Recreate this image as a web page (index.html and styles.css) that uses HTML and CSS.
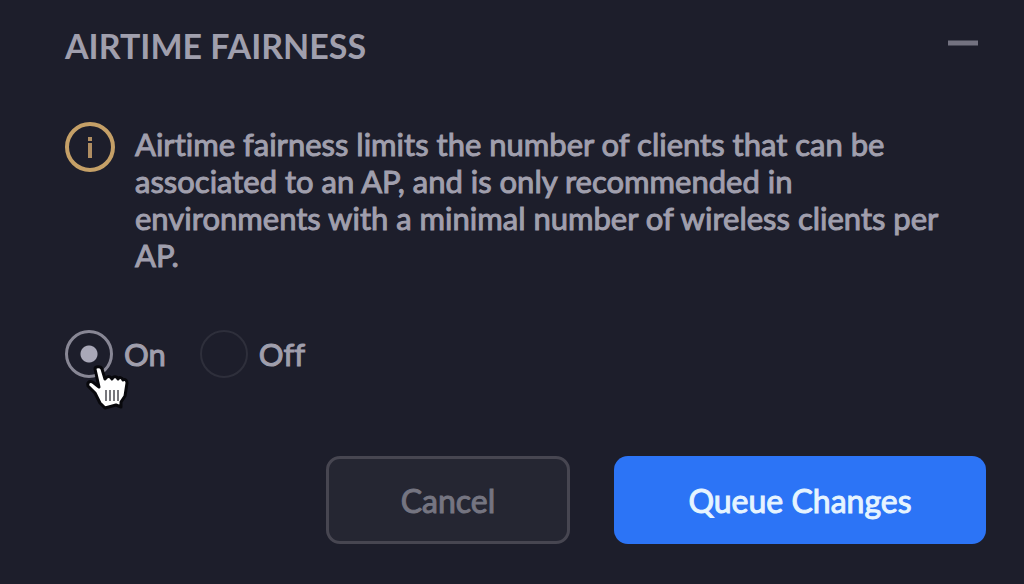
FILE: index.html
```html
<!DOCTYPE html>
<html lang="en">
<head>
  <meta charset="UTF-8" />
  <title>Airtime Fairness</title>
  <meta name="viewport" content="width=device-width, initial-scale=1.0"/>
  <link rel="stylesheet" href="styles.css">
</head>
<body>
  <form class="panel">
    <div class="panel-header">
      <h2>AIRTIME FAIRNESS</h2>
      <button type="button" class="collapse-button" aria-label="Collapse">
        <svg viewBox="0 0 30 6"><path d="M0 3h30" stroke="#737280" stroke-width="5"/></svg>
      </button>
    </div>

    <div class="note">
      <svg class="info-icon" viewBox="0 0 50 50">
        <circle cx="25" cy="25" r="23" fill="none" stroke="#c5a067" stroke-width="4"/>
        <path d="M25 15v4M25 21v15" stroke="#b08e62" stroke-width="4"/>
      </svg>
      <p>Airtime fairness limits the number of clients that can be associated to an AP, and is only recommended in environments with a minimal number of wireless clients per AP.</p>
    </div>

    <div class="options">
      <label class="option">
        <span class="radio-box">
          <input type="radio" name="airtime" value="on" checked>
          <!-- hand pointer -->
          <svg class="pointer" viewBox="0 0 44 46">
            <path d="M10 4C10 1 16 1 17 4L20 14L22 12C24 11 26 12 27 14C28 11 32 11 33 14C34 12 37 12 38 15C40 14 42 15 42 18L40 31L36 37L36 42L31 40L20 43L15 38L10 28L3 21C2 17 5 15 9 18L14 22Z" fill="#fff" stroke="#08080c" stroke-width="3" stroke-linejoin="round"/>
            <path d="M21 25v11M25 25v11M29 25v11M33 25v11" stroke="#77777c" stroke-width="2"/>
          </svg>
        </span>
        On
      </label>
      <label class="option">
        <span class="radio-box">
          <input type="radio" name="airtime" value="off">
        </span>
        Off
      </label>
    </div>

    <div class="actions">
      <button type="button" class="button cancel-button">Cancel</button>
      <button type="submit" class="button queue-button">Queue Changes</button>
    </div>
  </form>
</body>
</html>
```
FILE: styles.css
```css
body {
  font-family: Lato, sans-serif;
  font-variant-ligatures: none;
  background: #1d1e2b;
  color: #a09fad;
  margin: 0;
}

.panel {
  padding: 24px 38px 40px 65px;
}

/* header */
.panel-header {
  display: flex;
  align-items: flex-start;
  justify-content: space-between;
  padding-right: 8px;
}
.panel-header h2 {
  margin: 0;
  font-size: 34px;
  line-height: 44px;
  font-weight: bold;
}
.collapse-button {
  display: flex;
  margin-top: 16px;
  padding: 0;
  border: none;
  background: none;
  cursor: pointer;
}
.collapse-button svg {
  width: 30px;
  height: 6px;
}

/* info note */
.note {
  display: flex;
  align-items: flex-start;
  gap: 20px;
  margin-top: 54px;
}
.info-icon {
  flex: none;
  width: 50px;
  height: 50px;
}
.note p {
  margin: 4px 0 0;
  font-size: 31px;
  line-height: 37px;
}

/* slightly heavier than regular, lighter than bold */
.note p,
.option,
.button {
  -webkit-text-stroke: 1px currentColor;
}

/* radio buttons */
.options {
  display: flex;
  gap: 34px;
  margin-top: 56px;
}
.option {
  display: flex;
  align-items: center;
  gap: 11px;
  font-size: 31px;
  line-height: 48px;
  cursor: pointer;
}
.radio-box {
  display: flex;
  position: relative;
}
.option input {
  appearance: none;
  width: 48px;
  height: 48px;
  margin: 0;
  border: 2px solid #2e2f3b;
  border-radius: 50%;
}
.option input:checked {
  border: 3px solid #888795;
  background: radial-gradient(circle, #a9a8b8 8px, transparent 9px);
}
.pointer {
  position: absolute;
  left: 20px;
  top: 35px;
  width: 44px;
  height: 46px;
}

/* buttons */
.actions {
  display: flex;
  justify-content: flex-end;
  gap: 44px;
  margin-top: 78px;
}
.button {
  box-sizing: border-box;
  height: 88px;
  font-family: inherit;
  font-size: 32px;
  border-radius: 14px;
  cursor: pointer;
}
.cancel-button {
  width: 244px;
  border: 3px solid #474651;
  background: #252632;
  color: #757581;
}
.queue-button {
  width: 372px;
  border: none;
  background: #2c74f6;
  color: #e6f4ff;
}
```
